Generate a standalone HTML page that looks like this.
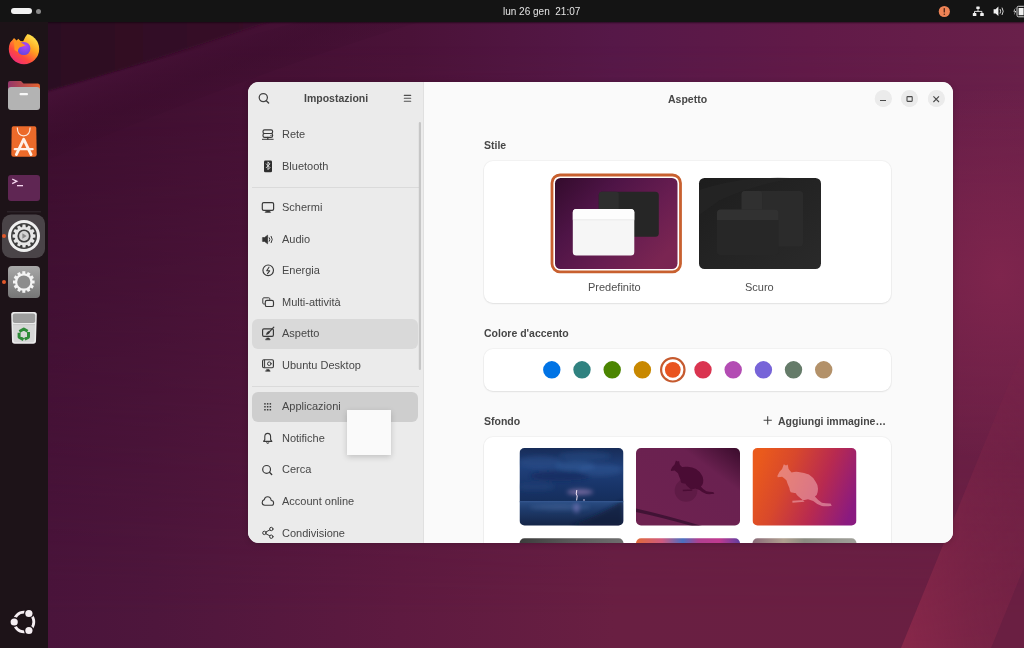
<!DOCTYPE html>
<html><head><meta charset="utf-8">
<style>
*{margin:0;padding:0;box-sizing:border-box}
html,body{width:1024px;height:648px;overflow:hidden}
body{position:relative;font-family:"Liberation Sans",sans-serif;background:#4a1540}
#win,#topbar{transform:translateZ(0)}
svg{display:block}
.abs{position:absolute}
#bg{position:absolute;left:0;top:0}
#topbar{position:absolute;left:0;top:0;width:1024px;height:22px;background:#141414;color:#e6e6e6;box-shadow:0 1px 1.5px rgba(10,0,10,.55)}
#dock{position:absolute;left:0;top:22px;width:48px;height:626px;background:#1d1318}
#win{position:absolute;left:248px;top:82px;width:705px;height:461px;border-radius:11px;overflow:hidden;background:#fafafa;box-shadow:0 1px 6px rgba(0,0,0,.18)}
#side{position:absolute;left:0;top:0;width:176px;height:461px;background:#ebebeb;border-right:1px solid #e0e0e0}
#content{position:absolute;left:176px;top:0;width:529px;height:461px;background:#fafafa}
.t{position:absolute;white-space:nowrap;color:#474747;font-size:11px;line-height:12px}
.b{font-weight:bold;font-size:10.5px}
#side .t{margin-top:-0.7px}
.card{position:absolute;background:#fff;border-radius:9px;box-shadow:0 0 0 1px rgba(0,0,0,.03),0 1px 2px rgba(0,0,0,.07)}
.sel{position:absolute;left:4px;width:166px;height:30px;border-radius:6px;background:#d9d9d9}
.ico{position:absolute;left:13px;width:13px;height:13px}
.sep{position:absolute;left:4px;width:167px;height:1px;background:#dadada}
.dot{position:absolute;width:17px;height:17px;border-radius:50%;top:279px}
.thumb{position:absolute;width:104px;height:78px;border-radius:6px;overflow:hidden}
.wb{position:absolute;width:17px;height:17px;border-radius:50%;background:#ebebeb}
</style></head><body>
<svg id="bg" width="1024" height="648" viewBox="0 0 1024 648">
<defs>
<linearGradient id="gtop" x1="48" y1="0" x2="1024" y2="0" gradientUnits="userSpaceOnUse">
<stop offset="0" stop-color="#3b0d2d"/><stop offset="0.37" stop-color="#4a1238"/><stop offset="0.58" stop-color="#561848"/><stop offset="0.78" stop-color="#611a48"/><stop offset="1" stop-color="#69204a"/>
</linearGradient>
<linearGradient id="gbot" x1="48" y1="0" x2="1024" y2="0" gradientUnits="userSpaceOnUse">
<stop offset="0" stop-color="#4a143b"/><stop offset="0.11" stop-color="#4e163c"/><stop offset="0.36" stop-color="#5e1a40"/><stop offset="0.58" stop-color="#691f42"/><stop offset="1" stop-color="#6a1f42"/>
</linearGradient>
<linearGradient id="gmask" x1="0" y1="45" x2="0" y2="615" gradientUnits="userSpaceOnUse">
<stop offset="0" stop-color="#fff" stop-opacity="0"/><stop offset="1" stop-color="#fff" stop-opacity="1"/>
</linearGradient>
<linearGradient id="fmg" x1="0" y1="648" x2="0" y2="330" gradientUnits="userSpaceOnUse"><stop offset="0" stop-color="#fff"/><stop offset="0.5" stop-color="#fff" stop-opacity="0.7"/><stop offset="1" stop-color="#fff" stop-opacity="0.15"/></linearGradient><mask id="fmk"><rect width="1024" height="648" fill="url(#fmg)"/></mask>
<mask id="mk"><rect width="1024" height="648" fill="url(#gmask)"/></mask>
<linearGradient id="band" x1="150" y1="55" x2="185" y2="140" gradientUnits="userSpaceOnUse">
<stop offset="0" stop-color="#481238" stop-opacity="0.7"/><stop offset="0.45" stop-color="#3a0c2c" stop-opacity="0.4"/><stop offset="1" stop-color="#3a0c2c" stop-opacity="0"/>
</linearGradient>
<radialGradient id="hl" cx="1000" cy="275" r="200" gradientUnits="userSpaceOnUse" gradientTransform="translate(1000 275) scale(0.7 0.95) translate(-1000 -275)">
<stop offset="0" stop-color="#82264e" stop-opacity="0.85"/><stop offset="1" stop-color="#82264e" stop-opacity="0"/>
</radialGradient>
<linearGradient id="fold" x1="0" y1="0" x2="1" y2="0">
<stop offset="0" stop-color="#88284a" stop-opacity="1"/><stop offset="0.3" stop-color="#88284a" stop-opacity="0.55"/><stop offset="1" stop-color="#88284a" stop-opacity="0"/>
</linearGradient>
</defs>
<rect width="1024" height="648" fill="url(#gtop)"/>
<rect width="1024" height="648" fill="url(#gbot)" mask="url(#mk)"/>
<path d="M48 60 Q170 40 300 22 L1024 22 L1024 60 Z" fill="none"/>
<path d="M48 90 Q165 58 298 22 L420 22 Q260 70 48 160 Z" fill="url(#band)"/>
<linearGradient id="wdg" x1="48" y1="0" x2="298" y2="0" gradientUnits="userSpaceOnUse"><stop offset="0" stop-color="#2c0921"/><stop offset="1" stop-color="#3a0d2b"/></linearGradient><filter id="bl1" x="-10%" y="-10%" width="120%" height="120%"><feGaussianBlur stdDeviation="1.2"/></filter>
<path d="M40 10 L302 10 Q165 58 48 91 L40 93 Z" fill="url(#wdg)" filter="url(#bl1)"/>
<ellipse cx="1000" cy="275" rx="140" ry="190" fill="url(#hl)"/>
<path d="M901 648 L1035 320 L1125 320 L991 648 Z" fill="url(#fold)" mask="url(#fmk)"/>
</svg>

<div id="topbar">
  <div class="abs" style="left:11px;top:8px;width:21px;height:6px;border-radius:3px;background:#f2f2f2"></div>
  <div class="abs" style="left:36px;top:9px;width:5px;height:5px;border-radius:50%;background:#8a8a8a"></div>
  <div class="t" style="left:503px;top:5.8px;font-size:10px;color:#e4e4e4">lun 26 gen&nbsp; 21:07</div>
  <svg class="abs" style="left:924px;top:0" width="100" height="22" viewBox="924 0 100 22">
<circle cx="944.3" cy="11.5" r="5.6" fill="#ee8355"/>
<rect x="943.6" y="7.9" width="1.4" height="4.6" rx="0.5" fill="#5a2a1a"/>
<circle cx="944.3" cy="14.3" r="0.8" fill="#5a2a1a"/>
<g fill="#f0f0f0">
<rect x="976.3" y="6.4" width="3.4" height="2.6" rx="0.5"/>
<rect x="972.8" y="13.1" width="3.6" height="3" rx="0.6"/>
<rect x="980.2" y="13.1" width="3.6" height="3" rx="0.6"/>
</g>
<path d="M978 9 V11.4 M974.5 13.4 V11.4 H981.9 V13.4" stroke="#f0f0f0" stroke-width="0.9" fill="none"/>
<path d="M993.6 9.2 H995.6 L998.4 6.6 V16 L995.6 13.4 H993.6 Z" fill="#f0f0f0"/>
<path d="M1000 9 Q1001.3 11.3 1000 13.6 M1002 7.6 Q1004.4 11.3 1002 15" stroke="#e8e8e8" stroke-width="0.9" fill="none"/>
<path d="M1015.6 7.6 L1013.3 11.6 H1015 L1013.9 15.2 L1016.2 11 H1014.5 Z" fill="#f0f0f0"/>
<rect x="1017" y="6.3" width="8" height="10.5" rx="1.5" fill="none" stroke="#d8d8d8" stroke-width="1"/>
<rect x="1018.6" y="8" width="5" height="7.2" fill="#f0f0f0"/>
</svg>
</div>

<div id="dock"><svg width="48" height="626" viewBox="0 22 48 626">
<defs>
<linearGradient id="ffg" x1="0.8" y1="0.1" x2="0.2" y2="0.95">
<stop offset="0" stop-color="#ffe04a"/><stop offset="0.35" stop-color="#ffa31f"/><stop offset="0.7" stop-color="#ff4a3d"/><stop offset="1" stop-color="#ee2a7b"/>
</linearGradient>
<radialGradient id="ffp" cx="0.6" cy="0.3" r="0.8">
<stop offset="0" stop-color="#b347f5"/><stop offset="1" stop-color="#5a44e0"/>
</radialGradient>
<linearGradient id="ftab" x1="0" y1="0" x2="1" y2="0">
<stop offset="0" stop-color="#93366a"/><stop offset="1" stop-color="#e5642e"/>
</linearGradient>
<linearGradient id="gbox" x1="0" y1="0" x2="0" y2="1">
<stop offset="0" stop-color="#a8a8a8"/><stop offset="1" stop-color="#767676"/>
</linearGradient>
</defs>
<!-- firefox -->
<circle cx="24" cy="49" r="15.2" fill="url(#ffg)"/>
<path d="M6 28 L28.6 28 L28.4 32.8 Q25.2 36.5 23.2 41.2 L20.5 41 L18.3 38.8 L16.6 40.6 L14 38 L12 40.5 L6 46 Z" fill="#1d1318"/>
<circle cx="23.8" cy="48.5" r="6.6" fill="url(#ffp)"/>
<path d="M14 41 Q19 40.5 25.5 45.5 L19.5 47.5 Q17.5 49 18 52 L14.5 50 Z" fill="#ff9222"/>
<!-- files -->
<path d="M8 83 Q8 81 10 81 L21 81 L23.5 83.5 L38 83.5 Q40 83.5 40 86 L40 90 L8 90 Z" fill="url(#ftab)"/>
<rect x="8" y="87" width="32" height="23" rx="3" fill="#b3b3b3"/>
<rect x="19.5" y="93" width="8.5" height="2.2" rx="1" fill="#f7f7f7"/>
<!-- app center -->
<path d="M13.4 126.3 L34.6 126.3 Q36.2 126.3 36.3 128 L36.7 154.4 Q36.7 156.8 34.4 156.8 L13.6 156.8 Q11.3 156.8 11.3 154.4 L11.7 128 Q11.8 126.3 13.4 126.3 Z" fill="#ec6a2a"/>
<path d="M17.3 127.6 Q17.3 135.8 23.7 135.8 Q30.1 135.8 30.1 127.6" fill="none" stroke="#fbe6da" stroke-width="1.2"/>
<path d="M16.3 154.6 L23.7 139.2 L31.1 154.6" fill="none" stroke="#fff1e8" stroke-width="2.8" stroke-linejoin="round" stroke-linecap="round"/>
<path d="M14.8 149.2 L32.6 149.2" stroke="#fff1e8" stroke-width="2.3" stroke-linecap="round"/>
<!-- terminal -->
<rect x="8" y="175" width="32" height="26" rx="3" fill="#5f2653"/>
<path d="M12.2 179 L16.8 181.3 L12.2 183.6" fill="none" stroke="#f6d8f0" stroke-width="1.3"/>
<rect x="17" y="185" width="6" height="1.3" fill="#f6d8f0"/>
<!-- separator -->
<rect x="7" y="211.3" width="34" height="1" fill="#342c31"/>
<!-- active settings -->
<rect x="2" y="214.5" width="43" height="43.5" rx="9" fill="#4a4448"/>
<circle cx="24" cy="236" r="16" fill="#efefef"/>
<circle cx="24" cy="236" r="13" fill="#3d3d3d"/>
<g fill="#e6e6e6">
<circle cx="24" cy="236" r="9.3"/>
<g id="teeth"><path d="M22.6 224.6 H25.4 L25.9 227.5 H22.1 Z"/><path d="M22.1 244.5 H25.9 L25.4 247.4 H22.6 Z"/></g>
<use href="#teeth" transform="rotate(30 24 236)"/><use href="#teeth" transform="rotate(60 24 236)"/>
<use href="#teeth" transform="rotate(90 24 236)"/><use href="#teeth" transform="rotate(120 24 236)"/>
<use href="#teeth" transform="rotate(150 24 236)"/>
</g>
<circle cx="24" cy="236" r="6.6" fill="#3d3d3d"/>
<circle cx="24" cy="236" r="4.9" fill="#d4d4d4"/>
<path d="M22.4 233.2 L26.6 236 L22.4 238.8 Z" fill="#888"/>
<circle cx="4" cy="236" r="2" fill="#e2582a"/>
<!-- settings 2 -->
<rect x="8" y="266" width="32" height="32" rx="4" fill="url(#gbox)"/>
<g fill="#f4f4f4">
<circle cx="23.8" cy="282" r="8.8"/>
<g id="t2"><rect x="22.3" y="271.2" width="3" height="3"/><rect x="22.3" y="289.8" width="3" height="3"/></g>
<use href="#t2" transform="rotate(30 23.8 282)"/><use href="#t2" transform="rotate(60 23.8 282)"/>
<use href="#t2" transform="rotate(90 23.8 282)"/><use href="#t2" transform="rotate(120 23.8 282)"/>
<use href="#t2" transform="rotate(150 23.8 282)"/>
</g>
<circle cx="23.8" cy="282" r="6.6" fill="#8d8d8d"/>
<circle cx="4" cy="282" r="2" fill="#e2582a"/>
<!-- trash -->
<path d="M11.2 314.5 Q11.2 312 13.7 312 L34.3 312 Q36.8 312 36.8 314.5 L36 341 Q36 343.8 33.2 343.8 L14.8 343.8 Q12 343.8 12 341 Z" fill="#ebebeb"/>
<rect x="12.8" y="313.5" width="22.4" height="9.6" rx="2" fill="#9d9d9d"/>
<path d="M13 325 L35 325 L34.4 340.5 Q34.4 342.3 32.6 342.3 L15.4 342.3 Q13.6 342.3 13.6 340.5 Z" fill="#d7d7d7"/>
<rect x="13" y="324.2" width="22" height="0.9" fill="#c4c4c4"/>
<polygon points="23.8,329 28.5,331.7 28.5,337.1 23.8,339.8 19.1,337.1 19.1,331.7" fill="none" stroke="#2e8b38" stroke-width="3" stroke-linejoin="round" stroke-dasharray="9.4 1.4" stroke-dashoffset="5"/>
<!-- ubuntu logo -->
<circle cx="24" cy="622" r="9.8" fill="none" stroke="#f5eef2" stroke-width="2.8"/>
<circle cx="14.2" cy="622" r="4.9" fill="#1d1318"/>
<circle cx="28.9" cy="613.5" r="4.9" fill="#1d1318"/>
<circle cx="28.9" cy="630.5" r="4.9" fill="#1d1318"/>
<circle cx="14.2" cy="622" r="3.6" fill="#f5eef2"/>
<circle cx="28.9" cy="613.5" r="3.6" fill="#f5eef2"/>
<circle cx="28.9" cy="630.5" r="3.6" fill="#f5eef2"/>
</svg></div>

<div id="win">
  <div id="side">
    <div class="t b" style="left:56px;top:11px">Impostazioni</div>
    <div class="t" style="left:34px;top:47px">Rete</div>
    <div class="t" style="left:34px;top:79px">Bluetooth</div>
    <div class="sep" style="top:105px"></div>
    <div class="t" style="left:34px;top:120px">Schermi</div>
    <div class="t" style="left:34px;top:152px">Audio</div>
    <div class="t" style="left:34px;top:183px">Energia</div>
    <div class="t" style="left:34px;top:215px">Multi-attività</div>
    <div class="sel" style="top:237px"></div>
    <div class="t" style="left:34px;top:246px">Aspetto</div>
    <div class="t" style="left:34px;top:278px">Ubuntu Desktop</div>
    <div class="sep" style="top:304px"></div>
    <div class="sel" style="top:310px;background:#cecece"></div>
    <div class="t" style="left:34px;top:319px">Applicazioni</div>
    <div class="t" style="left:34px;top:351px">Notifiche</div>
    <div class="t" style="left:34px;top:382px">Cerca</div>
    <div class="t" style="left:34px;top:414px">Account online</div>
    <div class="t" style="left:34px;top:446px">Condivisione</div>
<svg class="abs" style="left:0;top:0" width="176" height="461" viewBox="248 82 176 461">
<g fill="none" stroke="#3a3a3a" stroke-width="1.15" stroke-linecap="round" stroke-linejoin="round">
<!-- header search -->
<circle cx="263.3" cy="97.6" r="4.1" stroke="#444" stroke-width="1.25"/>
<path d="M266.3 100.7 L268.6 103" stroke="#444" stroke-width="1.4"/>
<!-- hamburger -->
<path d="M404.3 95.4 H410.7 M404.3 98.3 H410.7 M404.3 101.3 H410.7" stroke="#505050" stroke-width="1.1"/>
<!-- rete -->
<rect x="263" y="129.8" width="9.6" height="3.7" rx="1.6"/>
<rect x="263" y="133.5" width="9.6" height="3.8" rx="1.6"/>
<path d="M262.4 139.3 H273.2" stroke-width="1"/>
<path d="M267.8 137.4 V139" stroke-width="1.3"/>
<!-- schermi -->
<rect x="262.3" y="202.7" width="11.3" height="7.6" rx="1.4" stroke-width="1.2"/>
<path d="M265.4 212.4 L270.6 212.4 L269.2 210.6 L266.8 210.6 Z" fill="#3a3a3a" stroke-width="0.6"/>
<!-- audio -->
<path d="M262.8 237.6 H264.6 L267.6 235.2 V243.8 L264.6 241.4 H262.8 Z" fill="#333" stroke="#333" stroke-width="0.7"/>
<path d="M269.3 237.7 Q270.6 239.5 269.3 241.3" stroke-width="1"/>
<path d="M271.2 236.3 Q273.5 239.5 271.2 242.7" stroke-width="1"/>
<!-- energia -->
<circle cx="268.2" cy="270.3" r="5.3" stroke-width="1.15"/>
<path d="M269 267.2 L266.7 270.8 H269.7 L267.5 273.6" stroke-width="1.1"/>
<!-- multitasking -->
<path d="M264.5 304 H263.8 Q262.8 304 262.8 303 V298.8 Q262.8 297.8 263.8 297.8 H268.8 Q269.8 297.8 269.8 298.8 V299.5" stroke-width="1"/>
<rect x="265.3" y="300.3" width="8.2" height="6.2" rx="1.6" stroke-width="1.15"/>
<!-- aspetto -->
<rect x="262.6" y="328.8" width="10.8" height="7.6" rx="1.3" stroke-width="1.15"/>
<path d="M265.8 339.8 H270.2 L269 338 H267 Z" fill="#333" stroke-width="0.6"/>
<path d="M273.8 327.2 L269.6 331.6" stroke-width="1.2"/>
<path d="M268.9 331.2 Q266.6 331.8 266.3 334.6 Q269 334.4 269.8 332.2 Z" fill="#333" stroke-width="0.6"/>
<!-- ubuntu desktop -->
<rect x="262.6" y="359.7" width="10.8" height="8" rx="1.2" stroke-width="1.15"/>
<path d="M264.6 360.2 V367.2" stroke-width="1"/>
<circle cx="269.3" cy="363.7" r="1.8" stroke-width="1"/>
<path d="M265.8 371.3 H270.2 L269 369.4 H267 Z" fill="#333" stroke-width="0.6"/>
<!-- notifiche -->
<path d="M263.6 441.4 H271.8 L270.6 439.6 V436.8 Q270.6 433.4 267.7 433.4 Q264.8 433.4 264.8 436.8 V439.6 Z" stroke-width="1.1"/>
<path d="M266.4 442.8 Q267.7 444.3 269 442.8" fill="#333" stroke-width="0.8"/>
<!-- cerca -->
<circle cx="266.6" cy="469.4" r="3.9" stroke-width="1.2"/>
<path d="M269.5 472.3 L271.7 474.4" stroke-width="1.4"/>
<!-- cloud -->
<path d="M264.8 505.3 H271.4 Q273.6 505.3 273.6 502.9 Q273.6 500.6 271.2 500.5 Q270.6 496.8 267.6 496.8 Q264.9 496.8 264.3 499.6 Q262.2 500.2 262.2 502.6 Q262.2 505.3 264.8 505.3 Z" stroke-width="1.1"/>
<!-- share -->
<circle cx="264.4" cy="532.9" r="1.7" stroke-width="1"/>
<circle cx="271.3" cy="529" r="1.7" stroke-width="1"/>
<circle cx="271.3" cy="536.7" r="1.7" stroke-width="1"/>
<path d="M265.9 532 L269.8 529.9 M265.9 533.8 L269.8 535.8" stroke-width="1"/>
</g>
<!-- bluetooth -->
<rect x="264" y="160.6" width="8" height="11.6" rx="1.3" fill="#2e2e2e"/>
<path d="M266 163.6 L270 167.6 L268 169.6 V161.9 L270 163.9 L266 167.9" fill="none" stroke="#e8e8e8" stroke-width="0.9" stroke-linejoin="round"/>
<!-- rete dots -->
<circle cx="271" cy="135.4" r="0.6" fill="#3a3a3a"/>
<!-- app grid -->
<g fill="#3a3a3a">
<rect x="264.2" y="403.1" width="1.5" height="1.5"/><rect x="266.9" y="403.1" width="1.5" height="1.5"/><rect x="269.6" y="403.1" width="1.5" height="1.5"/>
<rect x="264.2" y="406" width="1.5" height="1.5"/><rect x="266.9" y="406" width="1.5" height="1.5"/><rect x="269.6" y="406" width="1.5" height="1.5"/>
<rect x="264.2" y="409" width="1.5" height="1.5"/><rect x="266.9" y="409" width="1.5" height="1.5"/><rect x="269.6" y="409" width="1.5" height="1.5"/>
</g>
<!-- scrollbar -->
<rect x="418.8" y="122" width="2.2" height="248" rx="1.1" fill="#c6c6c6"/>
</svg>
<div class="abs" style="left:99px;top:328px;width:44px;height:45px;background:#fafafa;box-shadow:0 2px 6px rgba(0,0,0,.18)"></div>
  </div>
  <div id="content">
    <div class="t b" style="left:244px;top:11px">Aspetto</div>
    <div class="wb" style="left:451px;top:8px"></div>
    <div class="wb" style="left:477px;top:8px"></div>
    <div class="wb" style="left:504px;top:8px"></div>
    <div class="t b" style="left:60px;top:57px">Stile</div>
    <div class="card" style="left:60px;top:79px;width:407px;height:142px"></div>
    <div class="t" style="left:164px;top:199px;color:#4e4e4e">Predefinito</div>
    <div class="t" style="left:321px;top:199px;color:#4e4e4e">Scuro</div>
    <div class="t b" style="left:60px;top:245px">Colore d'accento</div>
    <div class="card" style="left:60px;top:267px;width:407px;height:42px"></div>
    <div class="t b" style="left:60px;top:333px">Sfondo</div>
    <div class="t b" style="left:354px;top:333px">Aggiungi immagine…</div>
    <div class="card" style="left:60px;top:355px;width:407px;height:120px"></div>
<svg class="abs" style="left:0;top:0" width="529" height="461" viewBox="424 82 529 461">
<defs>
<linearGradient id="pdg" x1="0" y1="0" x2="1" y2="0.7">
<stop offset="0" stop-color="#330b2c"/><stop offset="0.35" stop-color="#4e1446"/><stop offset="0.7" stop-color="#671d50"/><stop offset="1" stop-color="#7a2552"/>
</linearGradient>
<linearGradient id="sdg" x1="0" y1="0" x2="1" y2="1">
<stop offset="0" stop-color="#1d1d1d"/><stop offset="1" stop-color="#2a2a2a"/>
</linearGradient>
<linearGradient id="stg" x1="0" y1="0" x2="0" y2="1">
<stop offset="0" stop-color="#172c58"/><stop offset="0.25" stop-color="#20407a"/><stop offset="0.5" stop-color="#183468"/><stop offset="0.68" stop-color="#152e5c"/><stop offset="0.7" stop-color="#284a80"/><stop offset="0.8" stop-color="#1e3a6a"/><stop offset="1" stop-color="#142446"/>
</linearGradient>
<radialGradient id="ltg" cx="0.5" cy="0.5" r="0.5">
<stop offset="0" stop-color="#f0d8f0" stop-opacity="0.95"/><stop offset="1" stop-color="#a070c0" stop-opacity="0"/>
</radialGradient>
<linearGradient id="pug" x1="0" y1="1" x2="1" y2="0">
<stop offset="0" stop-color="#6e2250"/><stop offset="0.72" stop-color="#6a2150"/><stop offset="1" stop-color="#3a0c2c"/>
</linearGradient>
<linearGradient id="org" x1="0" y1="0.35" x2="1" y2="0.65">
<stop offset="0" stop-color="#ea5a1c"/><stop offset="0.3" stop-color="#d8482c"/><stop offset="0.65" stop-color="#b82a50"/><stop offset="1" stop-color="#8a1a80"/>
</linearGradient>
<filter id="bl2" x="-20%" y="-50%" width="140%" height="200%"><feGaussianBlur stdDeviation="2"/></filter>
<clipPath id="c1"><rect x="519.5" y="448" width="104" height="77.5" rx="5"/></clipPath>
<clipPath id="c2"><rect x="636" y="448" width="104" height="77.5" rx="5"/></clipPath>
<clipPath id="c3"><rect x="752.5" y="448" width="104" height="77.5" rx="5"/></clipPath>
</defs>
<!-- window buttons -->
<circle cx="883" cy="98.7" r="8.3" fill="#ebebeb"/>
<circle cx="909.5" cy="98.7" r="8.3" fill="#ebebeb"/>
<circle cx="936.2" cy="98.7" r="8.3" fill="#ebebeb"/>
<g stroke="#4a4a4a" fill="none" stroke-width="1.1">
<path d="M880 100.5 H886"/>
<rect x="907" y="96.6" width="5.2" height="4.8" rx="0.6"/>
<path d="M933.4 96.4 L939 102 M939 96.4 L933.4 102"/>
</g>
<!-- predefinito -->
<rect x="552" y="175" width="128.5" height="96.8" rx="8" fill="none" stroke="#c8602f" stroke-width="2.8"/>
<rect x="555" y="178" width="122.5" height="91" rx="5.5" fill="url(#pdg)"/>
<rect x="598.8" y="191.7" width="60" height="45" rx="3.5" fill="#262626"/>
<rect x="598.8" y="191.7" width="20" height="45" rx="3" fill="#2e2e2e"/>
<rect x="572.8" y="209" width="61.5" height="46.5" rx="3.5" fill="#f6f6f6"/>
<path d="M572.8 219.5 V212.5 Q572.8 209 576.3 209 H630.8 Q634.3 209 634.3 212.5 V219.5 Z" fill="#fdfdfd"/>
<rect x="572.8" y="219.5" width="61.5" height="0.7" fill="#e4e4e4"/>
<!-- scuro -->
<rect x="699" y="178" width="122" height="91" rx="5.5" fill="url(#sdg)"/>
<path d="M699 190 Q740 176 790 178 L800 178 Q760 182 720 200 L699 215 Z" fill="#262626" opacity="0.6"/>
<rect x="741.6" y="191" width="61.5" height="55.5" rx="3.5" fill="#2b2b2b"/>
<rect x="741.6" y="191" width="20.5" height="55.5" rx="3" fill="#303030"/>
<rect x="717" y="209.5" width="61.5" height="45.5" rx="3.5" fill="#272727"/>
<path d="M717 220 V213 Q717 209.5 720.5 209.5 H775 Q778.5 209.5 778.5 213 V220 Z" fill="#313131"/>
<!-- accent dots -->
<circle cx="551.8" cy="369.8" r="8.7" fill="#0073e5"/>
<circle cx="582" cy="369.8" r="8.7" fill="#308280"/>
<circle cx="612.2" cy="369.8" r="8.7" fill="#4b8501"/>
<circle cx="642.4" cy="369.8" r="8.7" fill="#c88800"/>
<circle cx="672.8" cy="369.8" r="11.7" fill="none" stroke="#c65a2e" stroke-width="2.2"/>
<circle cx="672.8" cy="369.8" r="7.9" fill="#e95420"/>
<circle cx="703" cy="369.8" r="8.7" fill="#da3450"/>
<circle cx="733.2" cy="369.8" r="8.7" fill="#b34cb3"/>
<circle cx="763.4" cy="369.8" r="8.7" fill="#7764d8"/>
<circle cx="793.5" cy="369.8" r="8.7" fill="#657b69"/>
<circle cx="823.7" cy="369.8" r="8.7" fill="#b39169"/>
<!-- plus -->
<path d="M763.6 420.3 H771.8 M767.7 416.2 V424.4" stroke="#444" stroke-width="1.1"/>
<!-- thumbs -->
<g clip-path="url(#c1)">
<rect x="519.5" y="448" width="104" height="78" fill="url(#stg)"/>
<g filter="url(#bl2)">
<ellipse cx="540" cy="462" rx="22" ry="6" fill="#3560a0" opacity="0.3"/>
<ellipse cx="585" cy="456" rx="26" ry="5" fill="#2f5898" opacity="0.3"/>
<ellipse cx="560" cy="476" rx="30" ry="5" fill="#12285a" opacity="0.6"/>
<ellipse cx="600" cy="470" rx="22" ry="6" fill="#3a64a4" opacity="0.3"/>
<ellipse cx="535" cy="487" rx="20" ry="4" fill="#2a4c88" opacity="0.3"/>
<path d="M570 526 Q600 515 623.5 500 V526 Z" fill="#0f1a36" opacity="0.7"/>
<ellipse cx="580" cy="492" rx="13" ry="3" fill="#b890c8" opacity="0.55"/>
<ellipse cx="560" cy="507" rx="30" ry="3" fill="#4a6aa0" opacity="0.45"/>
<ellipse cx="575" cy="466" rx="20" ry="5" fill="#3a6aaa" opacity="0.35"/>
<ellipse cx="576.5" cy="508" rx="2.5" ry="5" fill="#8a80c8" opacity="0.6"/>
</g>
<rect x="519.5" y="501" width="104" height="1.3" fill="#3a5c96" opacity="0.8"/>
<path d="M576.8 490 L576.2 494 L577.2 496 L576.6 500.5" stroke="#f4e6f6" stroke-width="1" fill="none"/>
<circle cx="584" cy="500" r="0.8" fill="#e0d0f0"/>
</g>
<g clip-path="url(#c2)">
<rect x="636" y="448" width="104" height="78" fill="url(#pug)"/>
<circle cx="686" cy="490.4" r="11.3" fill="#561840" opacity="0.6"/>
<path transform="translate(48.9 89.2) scale(0.8)" d="M777.35 475.9 Q779 471.5 782.1 469 L783.8 464.2 L786 465.5 L787.7 464.6 L788.6 469 Q790 471 791.6 472.4 Q795 471.6 798.5 472 Q804.5 472.6 808.9 474.6 Q813.5 477.5 815.8 481.9 Q818.2 485 818 488.8 Q818 492.5 816.7 494.9 L814.9 496.6 Q818 500.5 821.9 502.7 Q826 503.6 830.5 503.5 L831.8 505.7 Q827 506.6 821.9 506.1 Q817 504.5 813.2 501 L808 499.2 L804.6 500.1 L792.3 500.8 L792.5 502.7 L804.6 501.8 L798.5 496.6 Q796.5 495 795.9 493.2 L790.7 492.3 Q789.4 490 789.4 488 Q787.5 484 786.4 480.2 Q784 477.8 782.1 476.7 L777.8 477.2 Z" fill="#4a0c34"/>
<path d="M636 508.5 Q665 515 702 526 L692 526 Q660 517 636 512 Z" fill="#3a1030" opacity="0.85"/>
</g>
<g clip-path="url(#c3)">
<rect x="752.5" y="448" width="104" height="78" fill="url(#org)"/>
<path d="M777.35 475.9 Q779 471.5 782.1 469 L783.8 464.2 L786 465.5 L787.7 464.6 L788.6 469 Q790 471 791.6 472.4 Q795 471.6 798.5 472 Q804.5 472.6 808.9 474.6 Q813.5 477.5 815.8 481.9 Q818.2 485 818 488.8 Q818 492.5 816.7 494.9 L814.9 496.6 Q818 500.5 821.9 502.7 Q826 503.6 830.5 503.5 L831.8 505.7 Q827 506.6 821.9 506.1 Q817 504.5 813.2 501 L808 499.2 L804.6 500.1 L792.3 500.8 L792.5 502.7 L804.6 501.8 L798.5 496.6 Q796.5 495 795.9 493.2 L790.7 492.3 Q789.4 490 789.4 488 Q787.5 484 786.4 480.2 Q784 477.8 782.1 476.7 L777.8 477.2 Z" fill="#f2b0b8" opacity="0.55"/>
</g>
<!-- row 2 -->
<linearGradient id="r2a" x1="0" y1="0" x2="1" y2="0"><stop offset="0" stop-color="#3c3c3c"/><stop offset="0.5" stop-color="#5a5a5a"/><stop offset="1" stop-color="#6e6e6e"/></linearGradient>
<linearGradient id="r2b" x1="0" y1="0" x2="1" y2="0"><stop offset="0" stop-color="#e06a3a"/><stop offset="0.25" stop-color="#d05a80"/><stop offset="0.45" stop-color="#4a70c0"/><stop offset="0.6" stop-color="#b04090"/><stop offset="0.8" stop-color="#c03a90"/><stop offset="1" stop-color="#6040a0"/></linearGradient>
<linearGradient id="r2c" x1="0" y1="0" x2="1" y2="0"><stop offset="0" stop-color="#8a6a78"/><stop offset="0.3" stop-color="#b0a090"/><stop offset="0.5" stop-color="#8a8a80"/><stop offset="1" stop-color="#a0a09a"/></linearGradient>
<rect x="519.5" y="538.3" width="104" height="10" rx="5" fill="url(#r2a)"/>
<rect x="636" y="538.3" width="104" height="10" rx="5" fill="url(#r2b)"/>
<rect x="752.5" y="538.3" width="104" height="10" rx="5" fill="url(#r2c)"/>
</svg>
  </div>
</div>
</body></html>
